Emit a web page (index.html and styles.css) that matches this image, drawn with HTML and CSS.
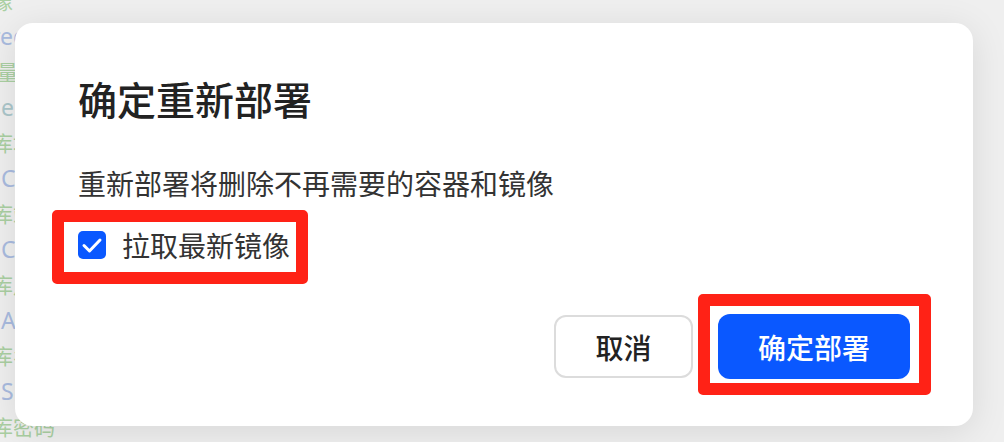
FILE: index.html
```html
<!DOCTYPE html>
<html lang="zh-CN">
<head>
<meta charset="UTF-8">
<meta name="viewport" content="width=device-width, initial-scale=1.0">
<title>确定重新部署</title>
<link rel="stylesheet" href="styles.css">
</head>
<body>
<div class="page">
  <div class="line zh first">镜像</div>
  <div class="line en">registry</div>
  <div class="line zh wide">变量</div>
  <div class="line en teal">env</div>
  <div class="line zh">据库地址</div>
  <div class="line en">CONTAINER</div>
  <div class="line zh">据库端口</div>
  <div class="line en">CACHE</div>
  <div class="line zh">据库用户</div>
  <div class="line en">ADMIN</div>
  <div class="line zh">据库名称</div>
  <div class="line en">SECRET</div>
  <div class="line zh">据库密码</div>
</div>

<div class="dialog">
  <h2 class="dialog-title">确定重新部署</h2>
  <p class="dialog-text">重新部署将删除不再需要的容器和镜像</p>
  <label class="check-row mark mark-check">
    <span class="checkbox">
      <svg width="28" height="28" viewBox="0 0 28 28"><path d="M6 14.5 L11.5 20 L22 9" fill="none" stroke="#fff" stroke-width="3" stroke-linecap="round" stroke-linejoin="round"/></svg>
    </span>
    <span class="check-label">拉取最新镜像</span>
  </label>
  <div class="dialog-footer">
    <button class="btn btn-cancel">取消</button>
    <div class="mark mark-btn">
      <button class="btn btn-primary">确定部署</button>
    </div>
  </div>
</div>
</body>
</html>
```

FILE: styles.css
```css
body {
  margin: 0;
  height: 100vh;
  overflow: hidden;
  background-color: #efefef;
  font-family: "Noto Sans CJK SC", "Noto Sans", sans-serif;
}
.page {
  margin-top: -17px;
}
.line {
  height: 35.5px;
  line-height: 35.5px;
  white-space: nowrap;
}
.line.zh {
  font-size: 21px;
  color: #aacfa2;
  margin-left: -29px;
}
.line.zh.wide {
  margin-left: -24px;
}
.line.en {
  font-family: "Noto Sans", sans-serif;
  font-size: 23px;
  color: #a9bbdf;
  margin-left: 1px;
}
.line.en.teal {
  color: #abc6ca;
}
.line.en:nth-child(2) {
  margin-left: -9px;
}

/* modal */
.dialog {
  position: absolute;
  left: 15px;
  top: 23px;
  width: 958px;
  height: 403px;
  box-sizing: border-box;
  padding: 52px 63px 0 63px;
  background: #fff;
  border-radius: 18px;
  box-shadow: 0 6px 36px rgba(0, 0, 0, 0.1);
  display: flex;
  flex-direction: column;
  align-items: flex-start;
}
.dialog-title {
  margin: 0;
  font-size: 39px;
  line-height: 47px;
  font-weight: 500;
  color: #222;
}
.dialog-text {
  margin: 41px 0 0 0;
  font-size: 28px;
  line-height: 40px;
  color: #333;
}
.check-row {
  display: flex;
  align-items: center;
  gap: 16px;
  margin-top: 28px;
}
.checkbox {
  width: 28px;
  height: 28px;
  border-radius: 5px;
  background-color: #0a58ff;
  display: flex;
}
.check-label {
  font-size: 28px;
  line-height: 28px;
  color: #333;
}
.dialog-footer {
  align-self: stretch;
  display: flex;
  justify-content: flex-end;
  align-items: center;
  gap: 25px;
  margin-top: 55px;
}
.btn {
  font-family: inherit;
  font-size: 28px;
  font-weight: 500;
  border-radius: 12px;
  cursor: pointer;
  padding: 0;
}
.btn-cancel {
  width: 139px;
  height: 63px;
  background: #fff;
  color: #222;
  border: 2px solid #dcdcdc;
}
.btn-primary {
  width: 192px;
  height: 65px;
  background-color: #0a58ff;
  color: #fff;
  border: none;
  display: block;
}

/* red annotation frames */
.mark {
  border: 12px solid #ff2216;
  border-radius: 5px;
}
.mark-check {
  padding: 9px 6px 13px 14px;
  margin: 7px -18px -25px -26px;
}
.mark-btn {
  padding: 8px 9px 4px 8px;
  margin: -20px -21px -16px -20px;
}
```
